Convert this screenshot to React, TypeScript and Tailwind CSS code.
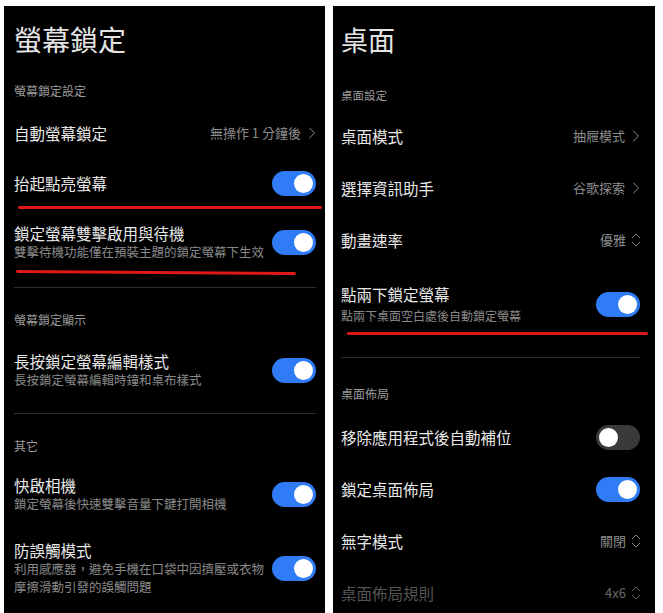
import React from "react";
import { ChevronRight, ChevronsUpDown } from "lucide-react";

const FONT = "font-['Noto_Sans_CJK_TC','Noto_Sans',sans-serif]";

function Toggle({ on = true }: { on?: boolean }) {
  return (
    <div
      className={
        on
          ? "relative h-[25px] w-[44px] shrink-0 rounded-full bg-[#2f7cf6]"
          : "relative h-[25px] w-[44px] shrink-0 rounded-full bg-[#3a3a3a]"
      }
    >
      <div
        className={
          on
            ? "absolute right-[3px] top-[3px] h-[19px] w-[19px] rounded-full bg-white"
            : "absolute left-[3px] top-[3px] h-[19px] w-[19px] rounded-full bg-white"
        }
      />
    </div>
  );
}

function Value({ text, updown = false, dim = false }: { text: string; updown?: boolean; dim?: boolean }) {
  return (
    <div className={dim ? "flex items-center gap-[1px] text-[13px] text-[#6a6a6a]" : "flex items-center gap-[1px] text-[13px] text-[#8e8e8e]"}>
      <span>{text}</span>
      {updown ? (
        <ChevronsUpDown size={18} strokeWidth={1.2} className="-mr-[5px]" />
      ) : (
        <ChevronRight size={20} strokeWidth={1.2} className="-mr-[6px]" />
      )}
    </div>
  );
}

const T = "text-[15.5px] leading-[20px] text-[#e8e8e8]";
const S = "text-[12.5px] leading-[18px] text-[#8a8a8a]";

export default function App() {
  return (
    <div className={`relative h-[613px] w-[663px] overflow-hidden bg-white ${FONT}`}>
      <div className="flex gap-[8px] pl-[4px] pt-[6px]">
        {/* Left panel */}
        <div className="flex h-[607px] w-[321px] flex-col overflow-hidden bg-black pl-[10px] pr-[9px]">
          <div className="flex h-[66px] shrink-0 items-center text-[28px] leading-none text-[#e4e4e4]">螢幕鎖定</div>
          <div className="flex h-[37px] shrink-0 items-center text-[12px] leading-none text-[#9a9a9a]">螢幕鎖定設定</div>
          <div className="flex h-[48px] shrink-0 items-center justify-between">
            <span className={T}>自動螢幕鎖定</span>
            <Value text="無操作 1 分鐘後" />
          </div>
          <div className="flex h-[52px] shrink-0 items-center justify-between">
            <span className={T}>抬起點亮螢幕</span>
            <Toggle />
          </div>
          <div className="flex h-[66px] shrink-0 items-center justify-between">
            <div className="flex flex-col">
              <span className={T}>鎖定螢幕雙擊啟用與待機</span>
              <span className={S}>雙擊待機功能僅在預裝主題的鎖定螢幕下生效</span>
            </div>
            <Toggle />
          </div>
          <div className="mt-[12px] h-px shrink-0 bg-[#2e2e2e]" />
          <div className="flex h-[56px] shrink-0 items-end pb-[18px] text-[12px] leading-none text-[#9a9a9a]">螢幕鎖定顯示</div>
          <div className="flex h-[52px] shrink-0 items-center justify-between">
            <div className="flex flex-col">
              <span className={T}>長按鎖定螢幕編輯樣式</span>
              <span className={S}>長按鎖定螢幕編輯時鐘和桌布樣式</span>
            </div>
            <Toggle />
          </div>
          <div className="mt-[17px] h-px shrink-0 bg-[#2e2e2e]" />
          <div className="flex h-[55px] shrink-0 items-end pb-[17px] text-[12px] leading-none text-[#9a9a9a]">其它</div>
          <div className="flex h-[50px] shrink-0 items-center justify-between">
            <div className="flex flex-col">
              <span className={T}>快啟相機</span>
              <span className={S}>鎖定螢幕後快速雙擊音量下鍵打開相機</span>
            </div>
            <Toggle />
          </div>
          <div className="flex h-[98px] shrink-0 items-center justify-between">
            <div className="flex flex-col">
              <span className={T}>防誤觸模式</span>
              <span className={S}>
                利用感應器，避免手機在口袋中因擠壓或衣物
                <br />
                摩擦滑動引發的誤觸問題
              </span>
            </div>
            <Toggle />
          </div>
        </div>

        {/* Right panel */}
        <div className="flex h-[607px] w-[322px] flex-col overflow-hidden bg-black pl-[8px] pr-[15px]">
          <div className="flex h-[66px] shrink-0 items-center text-[27px] leading-none text-[#e4e4e4]">桌面</div>
          <div className="flex h-[38px] shrink-0 items-end pb-[9px] text-[11.5px] leading-none text-[#9a9a9a]">桌面設定</div>
          <div className="flex h-[52px] shrink-0 items-center justify-between">
            <span className={T}>桌面模式</span>
            <Value text="抽屜模式" />
          </div>
          <div className="flex h-[52px] shrink-0 items-center justify-between">
            <span className={T}>選擇資訊助手</span>
            <Value text="谷歌探索" />
          </div>
          <div className="flex h-[52px] shrink-0 items-center justify-between">
            <span className={T}>動畫速率</span>
            <Value text="優雅" updown />
          </div>
          <div className="flex h-[76px] shrink-0 items-center justify-between">
            <div className="flex flex-col">
              <span className={T}>點兩下鎖定螢幕</span>
              <span className="mt-[3px] text-[12px] leading-[18px] text-[#8a8a8a]">點兩下桌面空白處後自動鎖定螢幕</span>
            </div>
            <Toggle />
          </div>
          <div className="mt-[15px] h-px shrink-0 bg-[#2e2e2e]" />
          <div className="flex h-[53px] shrink-0 items-end pb-[11px] text-[12px] leading-none text-[#9a9a9a]">桌面佈局</div>
          <div className="flex h-[52px] shrink-0 items-center justify-between">
            <span className={T}>移除應用程式後自動補位</span>
            <Toggle on={false} />
          </div>
          <div className="flex h-[52px] shrink-0 items-center justify-between">
            <span className={T}>鎖定桌面佈局</span>
            <Toggle />
          </div>
          <div className="flex h-[52px] shrink-0 items-center justify-between">
            <span className={T}>無字模式</span>
            <Value text="關閉" updown />
          </div>
          <div className="flex h-[52px] shrink-0 items-center justify-between">
            <span className="text-[15.5px] leading-[20px] text-[#555555]">桌面佈局規則</span>
            <Value text="4x6" updown dim />
          </div>
        </div>
      </div>

      {/* red annotation lines */}
      <div className="absolute left-[18px] top-[206px] h-[3px] w-[304px] rounded-full bg-[#e01818]" />
      <div className="absolute left-[16px] top-[271px] h-[3px] w-[280px] rotate-[0.4deg] rounded-full bg-[#e01818]" />
      <div className="absolute left-[347px] top-[332px] h-[3px] w-[301px] rounded-full bg-[#e01818]" />
    </div>
  );
}
